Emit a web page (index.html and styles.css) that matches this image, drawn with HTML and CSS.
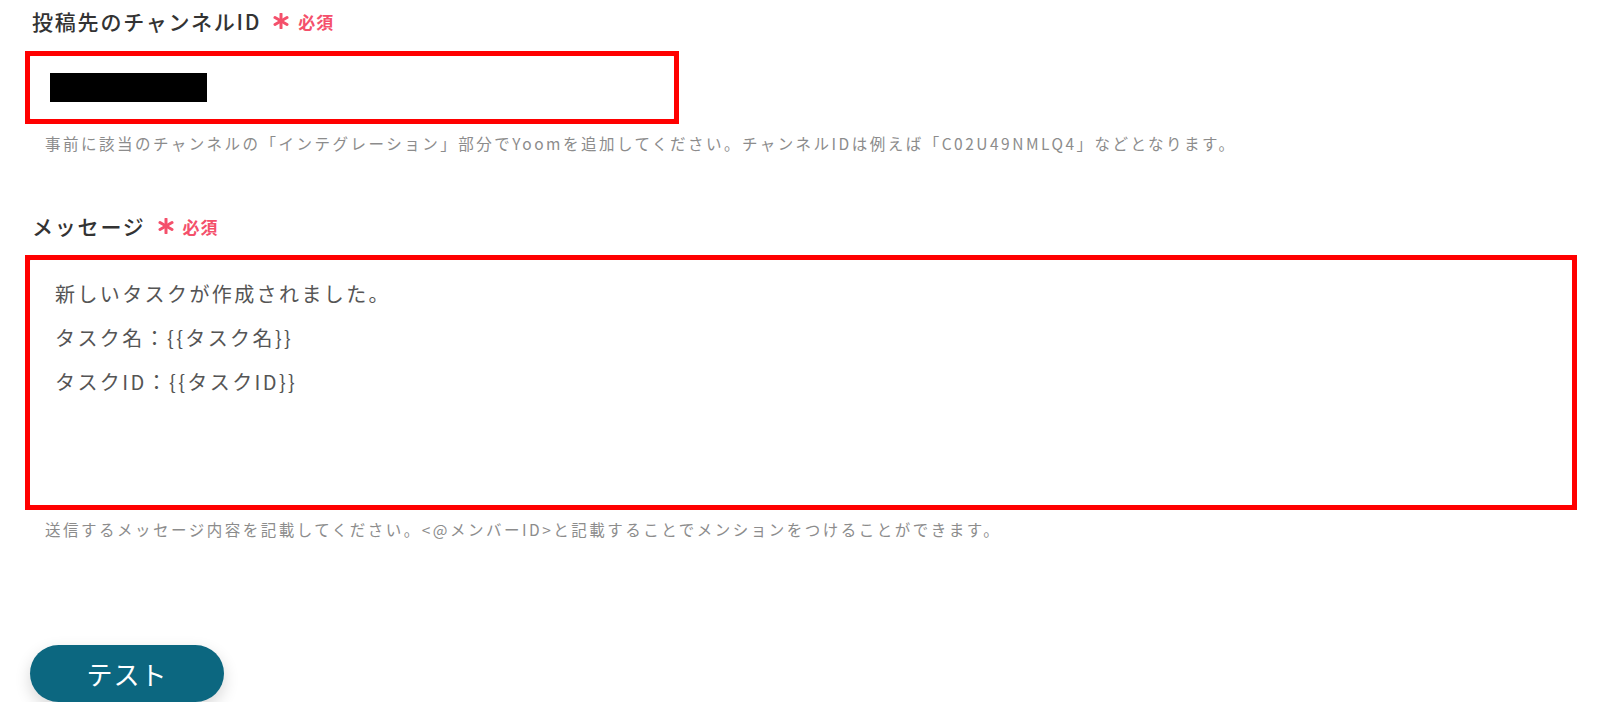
FILE: index.html
```html
<!DOCTYPE html>
<html lang="ja">

<head>
  <meta charset="UTF-8">
  <meta name="viewport" content="width=device-width, initial-scale=1.0">
  <title>Slack投稿設定</title>
  <link rel="stylesheet" href="styles.css">
</head>

<body>
  <div class="page">
    <div class="field">
      <div class="label">
        <span class="label-text">投稿先のチャンネルID</span>
        <svg class="req-mark" viewBox="0 0 16 16" width="16" height="16">
          <line x1="8" y1="1" x2="8" y2="15" />
          <line x1="2" y1="4.5" x2="14" y2="11.5" />
          <line x1="2" y1="11.5" x2="14" y2="4.5" />
        </svg>
        <span class="req">必須</span>
      </div>
      <div class="frame frame-short">
        <div class="input">
          <span class="masked"></span>
        </div>
      </div>
      <p class="help help-1">事前に該当のチャンネルの「インテグレーション」部分でYoomを追加してください。チャンネルIDは例えば「C02U49NMLQ4」などとなります。</p>
    </div>

    <div class="field field-msg">
      <div class="label">
        <span class="label-text">メッセージ</span>
        <svg class="req-mark" viewBox="0 0 16 16" width="16" height="16">
          <line x1="8" y1="1" x2="8" y2="15" />
          <line x1="2" y1="4.5" x2="14" y2="11.5" />
          <line x1="2" y1="11.5" x2="14" y2="4.5" />
        </svg>
        <span class="req">必須</span>
      </div>
      <div class="frame">
        <div class="textarea">
          <p>新しいタスクが作成されました。</p>
          <p>タスク名：{{タスク名}}</p>
          <p>タスクID：{{タスクID}}</p>
        </div>
      </div>
      <p class="help help-2">送信するメッセージ内容を記載してください。&lt;@メンバーID&gt;と記載することでメンションをつけることができます。</p>
    </div>

    <button class="btn-test" type="button">テスト</button>
  </div>
</body>

</html>
```

FILE: styles.css
```css
html,
body {
  margin: 0;
  padding: 0;
  background: #fff;
}

body {
  font-family: "Noto Sans CJK JP", "Noto Sans", sans-serif;
  color: #333;
}

p {
  margin: 0;
}

.page {
  padding: 6px 23px 0 27px;
}

/* label row */
.label {
  display: flex;
  align-items: center;
  height: 30px;
  padding-left: 5px;
}

.label-text {
  font-size: 21px;
  font-weight: 500;
  letter-spacing: 1.8px;
  color: #333;
}

.req-mark {
  margin-left: 12px;
  stroke: #f4506b;
  stroke-width: 3;
  stroke-linecap: round;
}

.req {
  margin-left: 9px;
  font-size: 17px;
  font-weight: 700;
  color: #f4506b;
  letter-spacing: 1px;
}

/* red highlight drawn over the inputs */
.frame {
  position: relative;
  margin-top: 17px;
}

.frame-short {
  width: fit-content;
}

.frame::after {
  content: "";
  position: absolute;
  top: -2px;
  left: -2px;
  right: -2px;
  bottom: -2px;
  border: 5px solid #ff0000;
  pointer-events: none;
}

.input {
  display: flex;
  align-items: center;
  width: 650px;
  height: 69px;
  padding-left: 22px;
  box-sizing: border-box;
  border: 1px solid #d6dae0;
  border-radius: 9px;
}

.masked {
  display: block;
  width: 157px;
  height: 29px;
  background: #000;
}

.textarea {
  height: 251px;
  padding: 14px 0 0 27px;
  box-sizing: border-box;
  border: 1px solid #d6dae0;
  border-radius: 9px;
}

.textarea p {
  font-size: 20px;
  line-height: 44px;
  letter-spacing: 2.4px;
  color: #555;
}

/* help text */
.help {
  margin-top: 11px;
  padding-left: 18px;
  font-size: 15.5px;
  line-height: 20px;
  letter-spacing: 2.5px;
  color: #8c8c8c;
}

.field-msg {
  margin-top: 58px;
}

.field-msg .frame {
  margin-top: 16px;
  margin-right: 2px;
}

.help-2 {
  margin-top: 11px;
}

/* button */
.btn-test {
  display: block;
  margin: 106px 0 0 3px;
  width: 194px;
  height: 57px;
  border: none;
  border-radius: 29px;
  background: #0c6780;
  color: #fff;
  font-family: "Noto Sans CJK JP", "Noto Sans", sans-serif;
  font-size: 26px;
  letter-spacing: 1px;
  box-shadow: 0 6px 16px rgba(0, 0, 0, 0.16);
}
```
